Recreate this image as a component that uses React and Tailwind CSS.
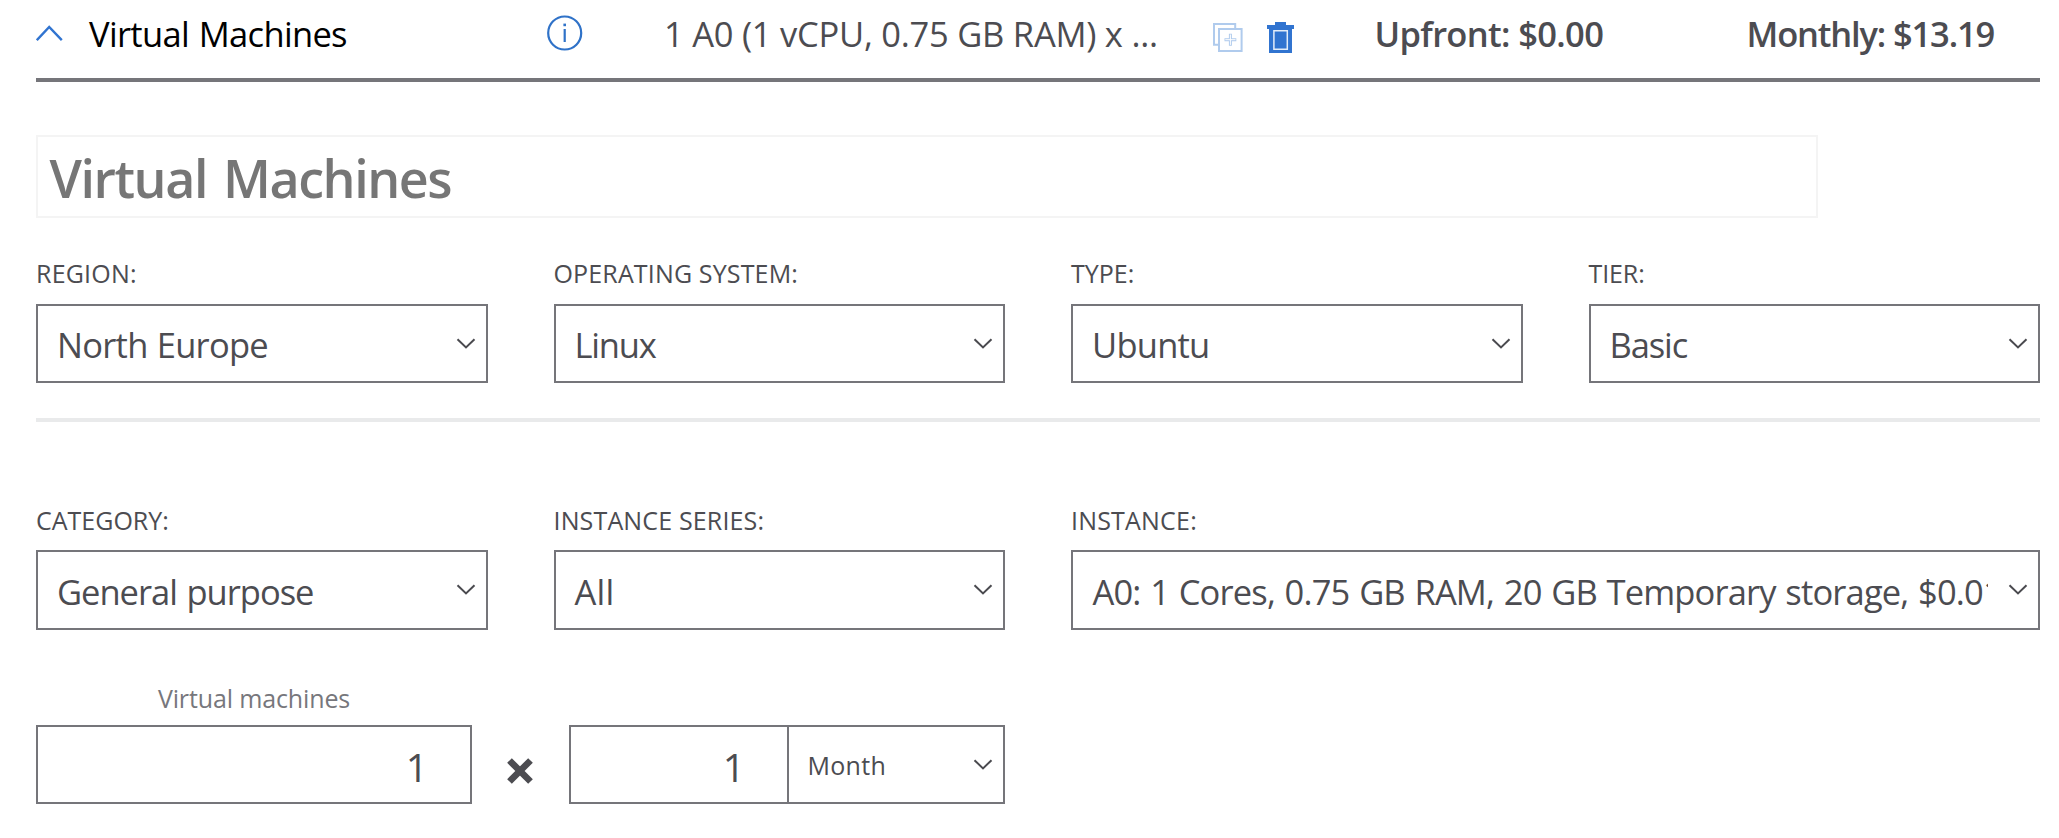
import React from "react";

function Chevron() {
  return (
    <svg className="mr-[10px] h-[12px] w-[20px] shrink-0" viewBox="0 0 20 12" fill="none">
      <path d="M1.5 1.2 L10 9.4 L18.5 1.2" stroke="#4a4a4f" strokeWidth="2" />
    </svg>
  );
}

function Select({ label, value, tracking, labelTracking, pad = "pl-[19px]", box, gap, wrap = "" }) {
  return (
    <div className={"min-w-0 " + wrap}>
      <div className={"text-[25px] leading-[34px] whitespace-nowrap " + labelTracking + " " + gap}>{label}</div>
      <div className={"flex items-center justify-between border-2 border-[#75757a] " + box}>
        <div className={"mr-[20px] min-w-0 flex-1 self-start overflow-hidden text-[34.5px] whitespace-nowrap " + pad}>
          <span className={tracking}>{value}</span>
        </div>
        <Chevron />
      </div>
    </div>
  );
}

const rowOne = { box: "h-[79px] leading-[78px]", gap: "mb-[14px]" };
const rowTwo = { box: "h-[80px] leading-[79px]", gap: "mb-[13px]" };

export default function App() {
  return (
    <div className="min-h-[838px] w-[2059px] bg-white pl-[36px] font-['Open_Sans','Noto_Sans',sans-serif] text-[#4c4c51]">
      <div className="w-[2004px]">
        <header className="flex h-[82px] items-start border-b-4 border-[#75757a] text-[34.5px] leading-[68px] whitespace-nowrap">
          <div className="w-[53px] shrink-0 pt-[24px]">
            <svg className="h-[18px] w-[27px]" viewBox="0 0 27 18" fill="none">
              <path d="M0.8 16.2 L13.2 3 L25.8 16.2" stroke="#3174d0" strokeWidth="2.4" />
            </svg>
          </div>
          <div className="w-[458px] shrink-0 tracking-[-0.68px] [word-spacing:1.5px] text-black">Virtual Machines</div>
          <div className="w-[117px] shrink-0 pt-[15px]">
            <svg className="h-[36px] w-[36px]" viewBox="0 0 36 36" fill="none">
              <circle cx="17.7" cy="18" r="16.5" stroke="#2f72c8" strokeWidth="2.2" />
              <rect x="16.6" y="14" width="2.2" height="13" fill="#2f72c8" />
              <rect x="16.4" y="8.6" width="2.6" height="2.6" fill="#2f72c8" />
            </svg>
          </div>
          <div className="w-[548px] shrink-0 tracking-[-0.25px]">1 A0 (1 vCPU, 0.75 GB RAM) x ...</div>
          <div className="w-[55px] shrink-0 pt-[22px]">
            <svg className="h-[32px] w-[32px]" viewBox="0 0 32 32" fill="none" stroke="#b0cbed" strokeWidth="2">
              <path d="M7 22.8 H2 V2 H23.2 V6" />
              <rect x="7" y="7" width="22.6" height="22" />
              <path d="M12.5 17.7 H24.3 M18.4 11.7 V23.7" strokeWidth="3" />
              <path d="M13.3 17.7 H23.5 M18.4 12.5 V22.9" stroke="#fff" strokeWidth="1" />
            </svg>
          </div>
          <div className="w-[107.5px] shrink-0 pt-[22px]">
            <svg className="h-[32px] w-[28px]" viewBox="0 0 28 32">
              <path fill="#3174d0" d="M8 0H19V3H27V7H25V31H2V7H0V3H8Z" />
              <path fill="none" stroke="#e3edf9" strokeWidth="1.5" d="M6.9 8.7H20.3V27.3H6.9Z" />
            </svg>
          </div>
          <div className="w-[372px] shrink-0 font-semibold tracking-[-0.65px]">Upfront: $0.00</div>
          <div className="font-semibold tracking-[-1.15px]">Monthly: $13.19</div>
        </header>

        <div className="mt-[53px] h-[83px] w-[1782px] border-2 border-[#f4f4f4] pl-[11.5px] text-[52px] leading-[82px] font-semibold tracking-[-1.45px] [word-spacing:4px] text-[#767676]">
          Virtual Machines
        </div>

        <div className="mt-[38px] grid grid-cols-4 gap-x-[66px] border-b-4 border-[#e9eaeb] pb-[35px]">
          <Select label="REGION:" value="North Europe" labelTracking="tracking-[0.2px]" tracking="tracking-[-0.75px] [word-spacing:1px]" {...rowOne} />
          <Select label="OPERATING SYSTEM:" value="Linux" labelTracking="tracking-[0.15px]" tracking="tracking-[-1.2px]" {...rowOne} />
          <Select label="TYPE:" value="Ubuntu" labelTracking="tracking-normal" tracking="tracking-[-0.75px]" {...rowOne} />
          <Select label="TIER:" value="Basic" labelTracking="tracking-[-0.1px]" tracking="tracking-[-1.1px]" {...rowOne} />
        </div>

        <div className="mt-[81px] grid grid-cols-4 gap-x-[66px]">
          <Select label="CATEGORY:" value="General purpose" labelTracking="tracking-normal" tracking="tracking-[-1px] [word-spacing:1.5px]" {...rowTwo} />
          <Select label="INSTANCE SERIES:" value="All" labelTracking="tracking-[0.15px]" tracking="tracking-[0.3px]" pad="pl-[19px]" {...rowTwo} />
          <Select
            label="INSTANCE:"
            value="A0: 1 Cores, 0.75 GB RAM, 20 GB Temporary storage, $0.018/hour"
            labelTracking="tracking-[0.2px]"
            tracking="tracking-[-0.84px] [word-spacing:1.5px]"
            pad="pl-[19.5px]"
            wrap="col-span-2"
            {...rowTwo}
          />
        </div>

        <div className="mt-[51px] flex items-end">
          <div className="w-[436px]">
            <div className="mb-[10px] text-center text-[25px] leading-[34px] tracking-[-0.13px] text-[#77777c]">Virtual machines</div>
            <div className="h-[79px] border-2 border-[#75757a] pr-[42px] text-right text-[39px] leading-[79px]">1</div>
          </div>
          <div className="flex h-[79px] w-[97px] items-start justify-center pt-[32px]">
            <svg className="mr-[2px] h-[28px] w-[28px]" viewBox="0 0 28 28">
              <path d="M3.5 3.5 L24.5 24.5 M24.5 3.5 L3.5 24.5" stroke="#4c4c51" strokeWidth="6.6" />
            </svg>
          </div>
          <div className="flex h-[79px] w-[436px] border-2 border-[#75757a]">
            <div className="w-[218px] border-r-2 border-[#75757a] pr-[42px] text-right text-[39px] leading-[79px]">1</div>
            <div className="flex flex-1 items-center justify-between pl-[18.5px]">
              <span className="text-[25px] leading-[75px] tracking-[0.3px] pt-[1px]">Month</span>
              <Chevron />
            </div>
          </div>
        </div>
      </div>
    </div>
  );
}
